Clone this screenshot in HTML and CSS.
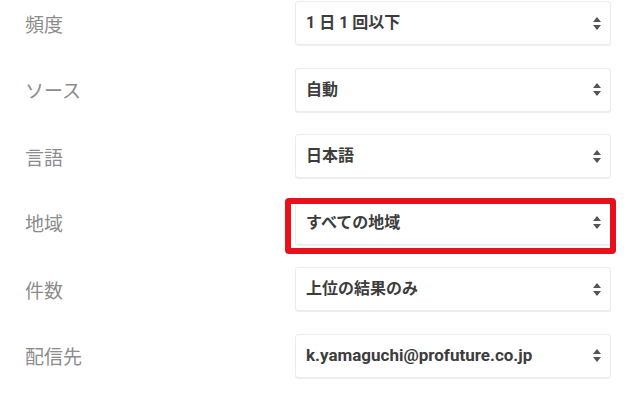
FILE: index.html
```html
<!DOCTYPE html>
<html lang="ja">
<head>
<meta charset="utf-8">
<link rel="stylesheet" href="styles.css">
</head>
<body>
<div class="form">
  <div class="row">
    <div class="label">頻度</div>
    <div class="select"><span class="value">1 日 1 回以下</span><span class="arrows"><i class="up"></i><i class="down"></i></span></div>
  </div>
  <div class="row">
    <div class="label">ソース</div>
    <div class="select"><span class="value">自動</span><span class="arrows"><i class="up"></i><i class="down"></i></span></div>
  </div>
  <div class="row">
    <div class="label">言語</div>
    <div class="select"><span class="value">日本語</span><span class="arrows"><i class="up"></i><i class="down"></i></span></div>
  </div>
  <div class="row">
    <div class="label">地域</div>
    <div class="select highlighted"><span class="value">すべての地域</span><span class="arrows"><i class="up"></i><i class="down"></i></span><span class="mark"></span></div>
  </div>
  <div class="row">
    <div class="label">件数</div>
    <div class="select"><span class="value">上位の結果のみ</span><span class="arrows"><i class="up"></i><i class="down"></i></span></div>
  </div>
  <div class="row">
    <div class="label">配信先</div>
    <div class="select"><span class="value latin">k.yamaguchi@profuture.co.jp</span><span class="arrows"><i class="up"></i><i class="down"></i></span></div>
  </div>
</div>
</body>
</html>
```
FILE: styles.css
```css
html, body {
  margin: 0;
  padding: 0;
  background: #ffffff;
}
body {
  width: 640px;
  height: 399px;
  overflow: hidden;
  font-family: "Roboto", "Noto Sans CJK JP", sans-serif;
}
.form {
  display: flex;
  flex-direction: column;
  gap: 22.5px;
  padding-top: 1px;
}
.row {
  display: flex;
  align-items: center;
  height: 44px;
}
.label {
  width: 270px;
  padding-left: 25px;
  font-size: 19px;
  color: #8c8c8c;
  font-family: "Noto Sans CJK JP", sans-serif;
  font-weight: 400;
  line-height: 1;
}
.select {
  position: relative;
  box-sizing: border-box;
  width: 316px;
  height: 44px;
  display: flex;
  align-items: center;
  justify-content: space-between;
  padding: 0 9px 0 10px;
  background: #fff;
  border: 1px solid #ececec;
  border-radius: 3px;
  box-shadow: 0 1px 1px rgba(0, 0, 0, 0.07);
}
.value {
  font-size: 16px;
  font-weight: 700;
  color: #3d3d3d;
  line-height: 1;
  white-space: pre;
}
.value.latin {
  font-size: 17px;
}
.arrows {
  display: flex;
  flex-direction: column;
  gap: 3px;
  align-items: center;
}
.arrows i {
  display: block;
  width: 0;
  height: 0;
  border-left: 4.5px solid transparent;
  border-right: 4.5px solid transparent;
}
.arrows .up {
  border-bottom: 5px solid #555;
}
.arrows .down {
  border-top: 5px solid #555;
}
.mark {
  position: absolute;
  left: -11px;
  top: -4px;
  width: 331px;
  height: 56px;
  box-sizing: border-box;
  border: 6px solid #e8101a;
  border-radius: 4px;
}
```
